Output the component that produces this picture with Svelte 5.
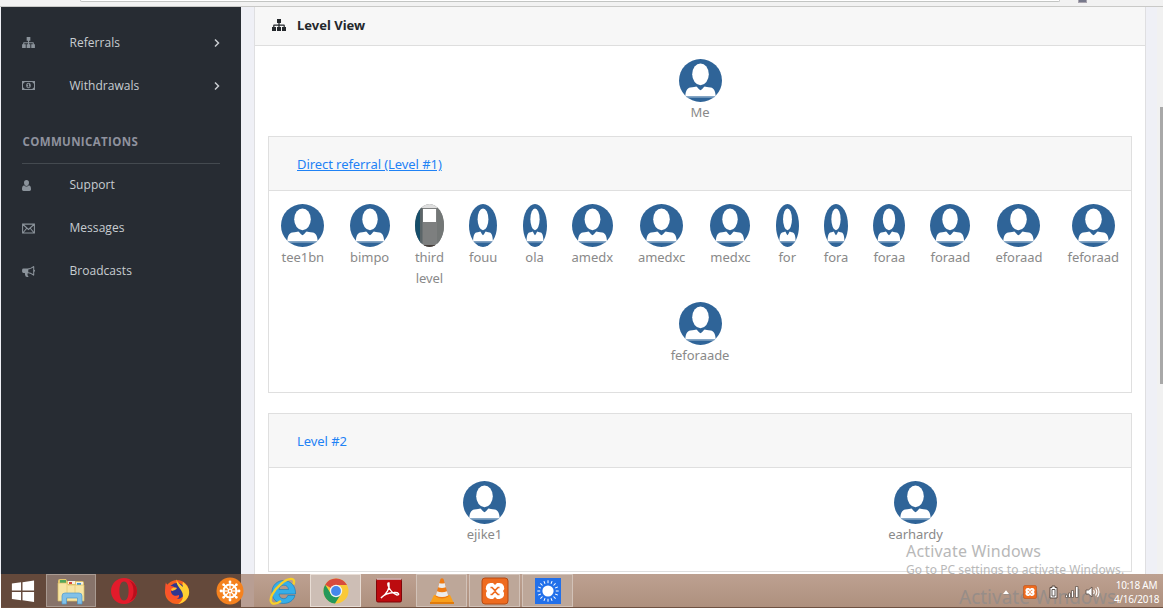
<script>
  const nav = [
    { label: 'Referrals', icon: 'tree' },
    { label: 'Withdrawals', icon: 'money' }
  ];
  const comms = [
    { label: 'Support', icon: 'user' },
    { label: 'Messages', icon: 'mail' },
    { label: 'Broadcasts', icon: 'horn' }
  ];
  // slot: column width, pic: avatar width
  const direct = [
    { name: 'tee1bn', slot: 43, pic: 43 },
    { name: 'bimpo', slot: 40, pic: 40 },
    { name: 'third level', slot: 29, pic: 29, photo: true },
    { name: 'fouu', slot: 28, pic: 28 },
    { name: 'ola', slot: 24, pic: 24 },
    { name: 'amedx', slot: 41, pic: 41 },
    { name: 'amedxc', slot: 47, pic: 43 },
    { name: 'medxc', slot: 40, pic: 40 },
    { name: 'for', slot: 23, pic: 23 },
    { name: 'fora', slot: 24, pic: 24 },
    { name: 'foraa', slot: 32, pic: 32 },
    { name: 'foraad', slot: 39.5, pic: 40 },
    { name: 'eforaad', slot: 47, pic: 43 },
    { name: 'feforaad', slot: 51, pic: 43 }
  ];
  const extra = [{ name: 'feforaade', slot: 58, pic: 43 }];
  const second = ['ejike1', 'earhardy'];
  const apps = ['start', 'files', 'opera', 'firefox', 'wheel', 'ie', 'chrome', 'pdf', 'vlc', 'xampp', 'sun'];
  const teeth = [0, 45, 90, 135, 180, 225, 270, 315];
  const rays = Array.from({ length: 16 }, (_, i) => i * 22.5);
</script>

{#snippet glyph(kind)}
  {#if kind === 'tree'}
    <svg class="glyph" viewBox="0 0 14 12"><path d="M5 0h4v4H7.600v1.600H12q.8 0 .8.800V8H14v4h-4V8h1.600V6.800h-4V8H9v4H5V8h1.400V6.800h-4V8H4v4H0V8h1.200V6.400q0-.8.800-.8h4.400V4H5z" /></svg>
  {:else if kind === 'money'}
    <svg class="glyph" viewBox="0 0 26 18"><path fill-rule="evenodd" d="M0 0h26v18H0zM5 2A3 3 0 0 1 2 5v8a3 3 0 0 1 3 3h16a3 3 0 0 1 3-3V5a3 3 0 0 1-3-3zM13 3.5c3 0 4.600 2.500 4.600 5.500s-1.600 5.500-4.600 5.500S8.400 12 8.400 9s1.600-5.500 4.600-5.500zm-.8 2L10.500 7l.8 1 .9-.7V11h-1.500v1.400H15.300V11h-1.400V5.500z" /></svg>
  {:else if kind === 'user'}
    <svg class="glyph user" viewBox="0 0 18 20" preserveAspectRatio="none"><path d="M9 0a5 5 0 0 1 5 5c0 3-2.200 6-5 6S4 8 4 5a5 5 0 0 1 5-5zM4.500 9.500C6 11.500 7.300 12 9 12s3-.5 4.500-2.500C17 10 18 13 18 17c0 2-1.300 3-3 3H3c-1.700 0-3-1-3-3 0-4 1-7 4.500-7.500z" /></svg>
  {:else if kind === 'mail'}
    <svg class="glyph" viewBox="0 0 26 20"><path d="M1.200 1.200h23.600v17.600H1.200zM1.500 1.500 13 12 24.500 1.500M2 18.500l7.500-9M24 18.500l-7.500-9" fill="none" stroke="currentColor" stroke-width="2.100" /></svg>
  {:else}
    <svg class="glyph" viewBox="0 0 28 24"><path fill-rule="evenodd" d="M25 0c1 0 1.500.8 1.500 1.600v6.600a2.400 2.400 0 0 1 0 4.600v6.600c0 1-.6 1.600-1.500 1.600-4-3.600-8-5.200-12-5.400-2 .8-2 2.500-.6 3.500-1 1.500.6 2.500 2 3.600-1.500 1.700-5 1.600-6.500.3-1.300-3-2.500-5.200-1.500-8H3a3 3 0 0 1-3-3V8.500a3 3 0 0 1 3-3h8.500C16 5.500 20.500 3.700 25 0zm-.8 3.500C20.500 6 17 7.300 13.500 7.600v5.800c3.500.3 7 1.600 10.700 4.200z" /></svg>
  {/if}
{/snippet}

{#snippet avatar(width, photo)}
  {#if photo}
    <svg class="avatar" style:width="{width}px" viewBox="0 0 29 43">
      <defs><clipPath id="oval"><ellipse cx="14.500" cy="21.500" rx="14.500" ry="21.500" /></clipPath></defs>
      <g clip-path="url(#oval)">
        <rect width="29" height="43" fill="#7d7f7f" />
        <rect width="6" height="43" fill="#164e6a" />
        <rect x="5" width="2.500" height="43" fill="#5b6568" />
        <rect x="22" width="7" height="43" fill="#737776" />
        <rect width="29" height="4" fill="#dedede" />
        <rect x="8" y="5" width="13" height="13" fill="#fff" />
        <rect y="41" width="29" height="2" fill="#463e3b" />
      </g>
    </svg>
  {:else}
    <svg class="avatar" style:width="{width}px" viewBox="0 0 43 43" preserveAspectRatio="none">
      <circle cx="21.500" cy="21.500" r="21.500" fill="#2f6498" />
      <ellipse cx="21.500" cy="15.300" rx="8.300" ry="10.900" fill="#fff" />
      <path d="M6.300 37.300c.3-5 1.600-8 5-8.700 3-.3 5-.8 6-1.100 1.300.5 2.700 3.500 4.200 3.700 1.500-.2 2.900-3.200 4.200-3.700 1 .3 3 .8 6 1.100 3.400.7 4.700 3.700 5 8.700z" fill="#fff" />
      <path d="M7.500 38h28" stroke="#a9c1d8" stroke-width="1" />
    </svg>
  {/if}
{/snippet}

{#snippet member(m)}
  <div class="member" style:width="{m.slot}px">
    {@render avatar(m.pic, m.photo)}
    <span class="name">{#each m.name.split(' ') as part}<span>{part}</span>{/each}</span>
  </div>
{/snippet}

{#snippet xampp()}
  <rect x="1" y="1" width="26" height="26" rx="3" fill="#ee6b1f" stroke="#b64a12" />
  <path d="M9.500 6h2.500l2 2 2-2h2.500a4.800 4.800 0 0 1 3.500 8 4.800 4.800 0 0 1-3.500 8H16l-2-2-2 2H9.500A4.800 4.800 0 0 1 6 14a4.800 4.800 0 0 1 3.500-8z" fill="#fff" />
  <path d="M9.500 10.500h1.500l3 3 3-3h1.500M9.500 17.500h1.500l3-3 3 3h1.500" fill="none" stroke="#ee6b1f" stroke-width="1.700" />
{/snippet}

{#snippet appIcon(kind)}
  <svg class="app-icon" viewBox="0 0 28 28">
    {#if kind === 'start'}
      <path d="M3 6.200 12.500 5v8.500H3zM14 4.800 26 3.200v10.300H14zM3 15h9.500v8.500L3 22.300zM14 15h12v10.300l-12-1.600z" fill="#fff" />
    {:else if kind === 'files'}
      <path d="M1 4q0-2 2-2h6l1 2h15q2 0 2 2v18H1z" fill="#e2c66d" />
      <path d="M3 3h6v3H3z" fill="#51a65a" /><path d="M11 4h7v3h-7z" fill="#f6f0e2" /><path d="M12 5h3v2h-3z" fill="#d74a3c" /><path d="M19 5h7v3h-7z" fill="#f6f0e2" /><path d="M20 6h4v2h-4z" fill="#3c97d5" />
      <path d="M1 6h9l1 2h16v16H1z" fill="#f7e5a5" stroke="#d9bb62" stroke-width=".7" />
      <path d="M10 6v18M18 8v10" stroke="#eacf7e" />
      <path d="M5 27v-8q0-3 3-3h14q3 0 3 3v8h-4.500v-6h-11v6z" fill="#82c1e8" stroke="#4f9aca" stroke-width=".7" />
    {:else if kind === 'opera'}
      <path d="M14 1c7.300 0 13 5.800 13 13s-5.700 13-13 13S1 21.200 1 14 6.700 1 14 1zm0 3.500c-3.500 0-4.600 5-4.600 9.500s1.100 9.500 4.600 9.500 4.600-5 4.600-9.500-1.100-9.500-4.600-9.500z" fill="#e31b2b" fill-rule="evenodd" />
      <path d="M19 3.500c3 2 4.500 6 4.500 10.500s-1.500 8.500-4.500 10.500c5-2 8-5.500 8-10.500s-3-8.500-8-10.500z" fill="#b90f1c" />
    {:else if kind === 'firefox'}
      <circle cx="14" cy="15" r="12" fill="#f6601f" />
      <circle cx="14" cy="14" r="8" fill="#2e3690" />
      <path d="M14 1c-1 4 2 5 6 9-1-3 0-5 0-5 4 3 7 7 6 12-1 5-5 9-11 10 5-3 6-8 4-12-2-5-7-7-5-14z" fill="#ffcf32" />
      <path d="M3 5c0 3 3 3 5 4 2 0 4 1 4 3l-4 2c0 4 4 6 8 4 1 4-5 6-9 4-4-2-6-10-4-17z" fill="#fb522b" />
      <path d="M8 12c2-1 3-2 6-1-1 2-3 2-5 3z" fill="#ffbd2f" />
    {:else if kind === 'wheel'}
      <circle cx="14" cy="14" r="13.500" fill="#f5821f" />
      <circle cx="14" cy="14" r="6.500" fill="none" stroke="#fff" stroke-width="2.200" />
      {#each teeth as a}
        <path d="M14 14V4.800" stroke="#fff" stroke-width="1.200" transform="rotate({a} 14 14)" />
        <circle cx="14" cy="5" r="1.400" fill="#fff" transform="rotate({a} 14 14)" />
      {/each}
      <circle cx="14" cy="14" r="2.200" fill="#fff" /><circle cx="14" cy="14" r="1" fill="#f5821f" />
    {:else if kind === 'ie'}
      <path d="M26 18.500c-1.500 5-6 8-11.500 8C7 26.500 3 21.500 3 15S8 3.500 14.800 3.500 27 9 26.500 17H10c.3 3 2 4.700 4.800 4.700 2 0 3.200-1 4-3.200zM10 12.500h9.500c-.3-2.800-2-4.300-4.600-4.300s-4.500 1.500-4.900 4.300z" fill="#35aee8" fill-rule="evenodd" stroke="#1378b8" stroke-width=".6" />
      <path d="M24.500 7.500c3-8.500-6-6-12-1C4.500 13-1 23 3 26c2 1.500 6 0 9-2" fill="none" stroke="#f6cf2a" stroke-width="2.300" />
    {:else if kind === 'chrome'}
      <circle cx="14" cy="14" r="12.500" fill="#fac938" />
      <path d="M14 14 3.200 7.700A12.500 12.500 0 0 1 25 8H14z" fill="#d84b3e" />
      <path d="M3.200 7.700A12.500 12.500 0 0 0 13 26.500l6-9.500H9z" fill="#24985a" />
      <circle cx="14" cy="14" r="6.200" fill="#f3f3f3" /><circle cx="14" cy="14" r="4.900" fill="#4587ec" />
    {:else if kind === 'pdf'}
      <rect x="1.500" y="2" width="25" height="23" rx="1.500" fill="#bc0b0f" stroke="#7f0609" />
      <path d="M2 2h24" stroke="#d8cbc7" stroke-width="1.500" />
      <path d="M6 21c6-4 9-10 8-15-3-1 0 9 8 12 3 0 2-3-3-2.500-5 0-11 2.500-13 5.500z" fill="none" stroke="#fff" stroke-width="1.400" />
    {:else if kind === 'vlc'}
      <path d="M6 18h16l4 8.500H2z" fill="#f9a01c" /><path d="M2 25h24v2H2z" fill="#e07a0c" />
      <path d="M12.500 2q1.500-1.500 3 0l5 17.500q-6.500 4-13 0z" fill="#ef7b13" />
      <path d="m11.400 6-1.200 4.200q3.800 1.500 7.600 0L16.600 6q-2.600 1-5.200 0zM9 14.300 7.800 18.500q6.200 3 12.400 0L19 14.300q-5 2-10 0z" fill="#ececec" />
    {:else if kind === 'xampp'}
      {@render xampp()}
    {:else}
      <rect x="1" y="1" width="26" height="26" fill="#2270ea" />
      <circle cx="14" cy="14" r="5.600" fill="#fff" />
      {#each rays as a}<path d="M14 3.300v2.900" stroke="#fff" stroke-width="1" transform="rotate({a} 14 14)" />{/each}
    {/if}
  </svg>
{/snippet}

<div class="screen">
  <div class="browser-bar"><div class="address"></div><i class="ext"></i></div>
  <div class="viewport">
    <aside>
      {#each nav as item}
        <div class="item">
          <span class="icon">{@render glyph(item.icon)}</span>
          <span class="label">{item.label}</span>
          <svg class="chevron" viewBox="0 0 6 10"><path d="m1 1.500 3.500 3.500L1 8.500" fill="none" stroke="#c9ccd0" stroke-width="1.500" /></svg>
        </div>
      {/each}
      <h2>COMMUNICATIONS</h2>
      <div class="group">
        {#each comms as item}
          <div class="item">
            <span class="icon">{@render glyph(item.icon)}</span>
            <span class="label">{item.label}</span>
          </div>
        {/each}
      </div>
    </aside>
    <main>
      <section class="card">
        <header class="card-head">{@render glyph('tree')}<strong>Level View</strong></header>
        <div class="card-body">
          <div class="me">{@render member({ name: 'Me', slot: 43, pic: 43 })}</div>
          <section class="panel first">
            <header><a class="underlined" href="#one">Direct referral (Level #1)</a></header>
            <div class="members">{#each direct as m}{@render member(m)}{/each}</div>
            <div class="members">{#each extra as m}{@render member(m)}{/each}</div>
          </section>
          <section class="panel second">
            <header><a href="#two">Level #2</a></header>
            <div class="halves">
              {#each second as name}<div class="half">{@render member({ name, slot: 53, pic: 43 })}</div>{/each}
            </div>
          </section>
        </div>
      </section>
    </main>
    <div class="scrollbar"><div class="thumb"></div></div>
  </div>
  <div class="watermark title">Activate Windows</div>
  <div class="watermark sub">Go to PC settings to activate Windows.</div>
  <footer>
    {#each apps as app}
      <div class="app {app}">{@render appIcon(app)}</div>
    {/each}
    <div class="tray">
      <svg class="up" viewBox="0 0 8 5"><path d="M4 0 8 5H0z" fill="#fff" /></svg>
      <svg class="tray-x" viewBox="0 0 28 28">{@render xampp()}</svg>
      <svg class="battery" viewBox="0 0 9 14"><path d="M3 1h3v1.500h2V13H1V2.500h2z" fill="#fff" stroke="#584a43" /><path d="M3 4.500h3v6.500H3z" fill="#fff" stroke="#5d5550" /></svg>
      <svg class="signal" viewBox="0 0 14 12"><path d="M.5 9h2v2.500h-2zM3.500 7h2v4.500h-2zM6.500 4.500h2v7h-2zM10.500.500h2.500v11h-2.500z" fill="#fff" stroke="#584a43" stroke-width=".7" /></svg>
      <svg class="sound" viewBox="0 0 15 12"><path d="M1 4h2.500L7 1v10L3.500 8H1z" fill="#fff" stroke="#584a43" stroke-width=".8" /><path d="M8.500 4q1.500 2 0 4M10.500 2.500q2.500 3.500 0 7M12.500 1q3 5 0 10" fill="none" stroke="#fff" stroke-width="1.100" /></svg>
      <div class="clock"><span>10:18 AM</span><span>4/16/2018</span></div>
    </div>
    <div class="watermark echo">Activate Windows</div>
  </footer>
</div>

<style>
  :global(body) { margin: 0; overflow: hidden; }
  .screen { position: relative; width: 1163px; height: 608px; display: flex; flex-direction: column; overflow: hidden; background: #fff; font-family: "Noto Sans", "Open Sans", sans-serif; font-size: 13px; }
  .screen :global(*) { box-sizing: border-box; }
  svg { display: block; flex: none; }
  .browser-bar { flex: none; height: 7px; background: #f2f2f2; border-bottom: 1px solid #c9c9c7; display: flex; padding-left: 80px; align-items: flex-start; }
  .address { width: 980px; height: 2px; background: #fff; border: solid #c3c5c3; border-width: 0 1px 1px; border-radius: 0 0 3px 3px; }
  .ext { width: 9px; height: 3px; margin-left: 18px; background: #77798b; border: 1px solid #aaa5af; border-top: 0; }
  .viewport { height: 567px; display: flex; background: #eff0f6; padding-left: 1px; overflow: hidden; }
  aside { width: 240px; flex: none; background: #272c33; padding: 14px 21px 0 21px; font-family: "Open Sans", sans-serif; font-size: 12px; color: #c8cdd1; }
  .item { height: 43px; display: flex; align-items: center; }
  .icon { width: 47.500px; color: #8b939b; }
  .glyph { width: 13px; height: 11px; fill: currentColor; }
  .glyph.user { width: 9px; height: 11px; }
  .label { flex: 1; line-height: 16px; letter-spacing: .04px; }
  .chevron { width: 6px; height: 10px; }
  h2 { margin: 0; height: 57px; border-bottom: 1px solid #444a50; padding-top: 27px; padding-left: .5px; line-height: 16px; font-size: 11.500px; letter-spacing: .36px; font-weight: 700; color: #8f929e; }
  .group { margin-top: -.5px; }
  main { flex: 1; padding-left: 13px; display: flex; }
  .card { width: 892px; background: #fff; border: solid #dfdfe1; border-width: 0 1px; height: 567px; }
  .card-head { height: 39px; background: #f7f7f7; border-bottom: 1px solid #dedede; display: flex; align-items: center; gap: 11px; padding-left: 17px; color: #24282c; padding-bottom: 3px; }
  .card-head .glyph { width: 14px; height: 12px; }
  .card-head strong { font-size: 13px; font-weight: 700; line-height: 20px; }
  .card-body { padding: 13px 13px 0 13px; }
  .me { display: flex; justify-content: center; height: 77px; }
  .member { display: flex; flex-direction: column; align-items: center; }
  .avatar { height: 43px; }
  .name { display: flex; flex-direction: column; align-items: center; color: #898989; line-height: 21px; white-space: nowrap; letter-spacing: -.05px; }
  .panel { border: 1px solid #dfdfdf; }
  .panel header { height: 54px; background: #f7f7f7; border-bottom: 1px solid #dfdfdf; display: flex; align-items: center; padding-left: 28px; }
  .panel a { color: #1f82f5; text-decoration: none; line-height: 20px; letter-spacing: -.07px; }
  .panel a.underlined { text-decoration: underline; }
  .first { height: 257px; margin-bottom: 20px; }
  .second { height: 159px; }
  .members { display: flex; justify-content: center; gap: 25.300px; padding-top: 13px; }
  .halves { display: flex; padding-top: 13px; }
  .half { flex: 1; display: flex; justify-content: center; }
  .scrollbar { width: 6px; flex: none; background: #f1f1f1; padding: 100px 0 0 3px; }
  .thumb { height: 277px; background: #a8a8a8; }
  footer { position: relative; z-index: 1; height: 34px; flex: none; margin-left: 1px; display: flex; align-items: stretch; background: linear-gradient(90deg, #64493b 240px, #b89e93 240px, #b89e93 253px, transparent 253px), linear-gradient(#bda191, #ae907e); border-bottom: 1px solid #6e5141; }
  .app { width: 53px; flex: none; display: flex; align-items: center; justify-content: center; padding-top: 1px; }
  .app-icon { width: 28px; height: 28px; }
  .start { width: 44px; padding-right: 2px; }
  .start .app-icon { width: 27px; }
  .files { width: 50px; margin-right: 1px; margin-left: 1px; background: #87736a; border: 1px solid #a99a91; }
  .chrome, .vlc, .xampp, .sun { border: 1px solid #d2c2b8; background: #bda799; width: 51px; margin-right: 1px; margin-left: 1px; }
  .chrome { background: #cdbeb5; border-color: #e8ddd5; }
  .tray { flex: 1; display: flex; align-items: center; justify-content: flex-end; padding-right: 4px; padding-top: 2px; position: relative; z-index: 2; }
  .up { width: 6px; height: 4px; margin-right: 17px; margin-left: 0; }
  .up { margin-right: 14px; }
  .tray-x { width: 14px; height: 14px; margin-right: 12px; }
  .battery { width: 9px; height: 14px; margin-right: 7px; }
  .signal { width: 14px; height: 12px; margin-right: 6px; }
  .sound { width: 15px; height: 12px; margin-right: 14px; }
  .clock { display: flex; flex-direction: column; align-items: center; color: #fff; font-size: 10px; line-height: 14.500px; width: 45px; white-space: nowrap; letter-spacing: -.25px; padding-top: 1px; }
  .watermark { position: absolute; white-space: nowrap; color: #b8b8b8; font-weight: 400; }
  .title { left: 906px; top: 543px; font-size: 16px; line-height: 16px; letter-spacing: .18px; }
  .sub { left: 906px; top: 562px; font-size: 12px; line-height: 16px; letter-spacing: .06px; }
  .echo { left: 958px; top: 12px; font-size: 19px; line-height: 23px; color: #978d88; }
</style>
